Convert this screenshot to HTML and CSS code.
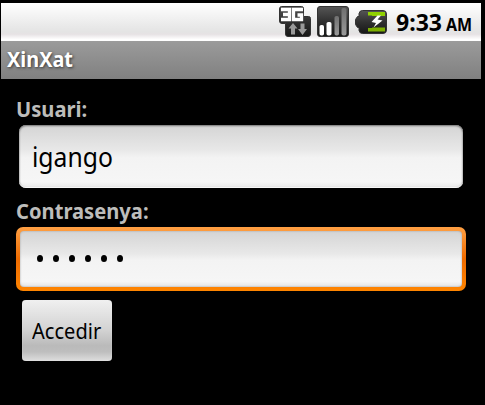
FILE: index.html
```html
<!DOCTYPE html>
<html lang="ca">
<head>
<meta charset="utf-8">
<title>XinXat</title>
<link rel="stylesheet" href="styles.css">
</head>
<body>
<main class="screen">
  <header class="status">
    <svg class="icons" width="110" height="34" viewBox="0 0 110 34">
      <defs>
        <linearGradient id="dark" x2="0" y2="1"><stop stop-color="#555"/><stop offset=".5" stop-color="#303030"/><stop offset="1" stop-color="#171717"/></linearGradient>
        <linearGradient id="bar" x2="0" y2="1"><stop stop-color="#707070"/><stop offset="1" stop-color="#999"/></linearGradient>
      </defs>
      <path d="M2.500 1.500H22.500Q24.500 1.500 24.500 3.500V11.500H29.500Q31.500 11.500 31.500 13.500V29Q31.500 31.500 29 31.500H9Q6.500 31.500 6.500 29V18.500H3Q.5 18.500 .5 16V4Q.5 1.500 2.500 1.500Z" fill="url(#dark)" stroke="#333"/>
      <path d="M2 4.500H10.500V14.500H2M4 9.500H10.500M24 4.500H14.500V14.500H22.500V10H18.500" fill="none" stroke="#fff" stroke-width="3.300"/>
      <path d="M14 18L18.500 23.500H16V29.500H12V23.500H9.500Z" fill="#999"/>
      <path d="M21.500 18.500H25.500V24H28L23.500 30L19 24H21.500Z" fill="#999"/>
      <rect x="38.500" y="1.500" width="31" height="30" rx="2.500" fill="url(#dark)" stroke="#333"/>
      <rect x="40.500" y="20" width="4.500" height="10.500" rx="1.800" fill="#fff"/>
      <rect x="47.500" y="17" width="5" height="13.500" rx="1.800" fill="#fff"/>
      <rect x="55.500" y="11" width="4.500" height="19.500" rx="1.800" fill="url(#bar)"/>
      <rect x="62.500" y="3" width="5" height="27.500" rx="1.800" fill="url(#bar)"/>
      <path d="M83.500 5.500H104Q107.500 5.500 107.500 9V25Q107.500 28.500 104 28.500H83.500Q80.500 28.500 80 25.500V22.500H78.500L76.500 19.500V14.500L78.500 11.500H80V8.500Q80.500 5.500 83.500 5.500Z" fill="url(#dark)" stroke="#333"/>
      <path d="M89 7H106V11H93V10.500H89Z" fill="#8fd000"/>
      <path d="M89 26.500H106V22.500H93V23H89Z" fill="#7daf00"/>
      <path d="M98.500 10.500L92.500 17L97 18L94.500 22.500L103.500 15.500L98.500 14.500L102 10.500Z" fill="#fff"/>
    </svg>
    <div class="clock"><span class="time">9:33</span><span class="ampm">AM</span></div>
  </header>
  <h1 class="title"><span>XinXat</span></h1>
  <form class="form">
    <div class="label"><span class="user-label">Usuari:</span></div>
    <div class="field"><span class="value">igango</span></div>
    <div class="label second"><span class="pass-label">Contrasenya:</span></div>
    <div class="field focused"><div class="inner"><i></i><i></i><i></i><i></i><i></i><i></i></div></div>
    <button class="button" type="button"><span>Accedir</span></button>
  </form>
</main>
</body>
</html>
```
FILE: styles.css
```css
* { box-sizing: border-box; }
body { margin: 0; background: #000; font-family: "Noto Sans", "Open Sans", sans-serif; overflow: hidden; }
.screen { width: 480px; height: 402px; margin: 3px 0 0 1px; }
.screen span { display: inline-block; transform-origin: left center; white-space: nowrap; }
.status { height: 38px; display: flex; background: linear-gradient(#fff, #e4e4e4 75%, #e6e2e4 82%, #fff 96%); }
.icons { flex: none; margin: 2px 0 0 278px; }
.clock { display: flex; align-items: baseline; font-weight: 700; color: #000; margin-left: 7px; height: 38px; line-height: 38px; }
.time { font-size: 24px; width: 50px; transform: scaleX(.96); }
.ampm { font-size: 17px; transform: scaleX(.94); }
.title { margin: 0; height: 38px; padding-left: 6px; line-height: 37px; font-size: 21px; font-weight: 700; color: #fff; background: linear-gradient(#9b9b9b, #808080); text-shadow: 1px 1px 3px #333; }
.title span { transform: scaleX(.945); }
.form { padding: 16px 15px 0; }
.label { height: 30px; line-height: 28px; font-size: 21px; font-weight: 700; color: #bdbdbb; }
.label span { transform: scaleX(.96); }
.field { width: 444px; height: 63px; margin-left: 3px; padding-left: 13px; border-radius: 7px; line-height: 63px; font-size: 27px; color: #000; background: linear-gradient(#d4d4d4, #e8e8e8 40%, #f3f3f3 52%, #f6f6f6 90%, #e8e8e8); box-shadow: inset 0 1px 2px #777, inset 0 -1px 0 #fff, inset 0 0 2px #999; }
.value { transform: scaleX(.915); }
.second { margin-top: 9px; }
.focused { width: 450px; height: 64px; margin-left: 0; padding: 4px; background: linear-gradient(#ffa044, #ee6b00 50%, #ff8500); box-shadow: none; }
.inner { height: 56px; display: flex; gap: 10px; align-items: center; padding: 0 0 2px 17px; border-radius: 4px; background: linear-gradient(#d4d4d4, #e8e8e8 40%, #f3f3f3 52%, #f6f6f6 90%, #e4e4e4); box-shadow: inset 0 0 2px #999; }
.inner i { width: 6px; height: 7px; border-radius: 50%; background: #000; }
.button { display: block; width: 90px; height: 61px; margin: 9px 0 0 6px; padding: 0 0 0 10px; border: 0; border-radius: 4px; text-align: left; font: 21px "Noto Sans", "Open Sans", sans-serif; color: #000; background: linear-gradient(#f0f0f0, #d2d2d2 50%, #bababa 75%, #bebebe 85%, #dedede); box-shadow: inset 0 0 1px #eee; }
.button span { transform: scaleX(.955); }
```
